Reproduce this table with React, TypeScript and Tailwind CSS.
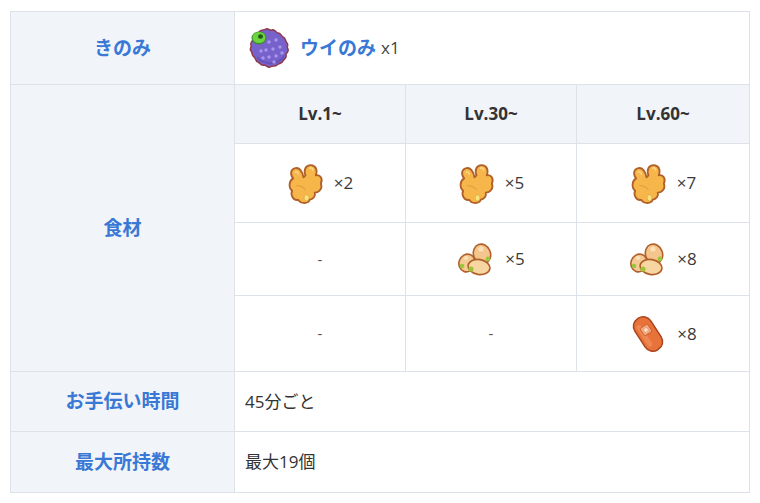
import React from "react";

const Berry = () => (
  <svg width="46" height="46" viewBox="0 0 46 46">
    <path
      d="M14 7 C16 4 19 6 21 4 C23 3 25 6 27 5 C30 4 31 8 33 8 C36 8 36 11 38 12 C41 13 40 16 42 18 C44 20 41 22 43 24 C44 27 41 28 41 30 C42 33 39 34 38 36 C37 39 34 38 32 40 C30 42 28 40 25 42 C23 43 21 40 19 40 C16 41 15 38 13 37 C10 36 11 33 9 32 C6 30 8 28 6 26 C4 24 7 22 6 20 C5 17 8 16 8 14 C8 11 11 10 12 9 Z"
      fill="#7762cc"
      stroke="#8e3b4c"
      strokeWidth="1.5"
      strokeLinejoin="round"
    />
    <path d="M12 31 C19 39 32 40 40 29 L39 33 C33 41 19 41 12 34 Z" fill="#5a47ab" opacity="0.55" />
    {[
      [24, 17], [31, 15], [35, 22], [28, 24], [21, 25], [31, 31], [24, 32], [37, 28], [16, 26], [18, 33], [29, 37],
    ].map(([x, y], i) => (
      <circle key={i} cx={x} cy={y} r="1.7" fill="#a796ea" />
    ))}
    <ellipse cx="14" cy="13" rx="7.5" ry="6.5" fill="#3d8a2a" />
    <ellipse cx="14" cy="12.5" rx="6.5" ry="5.5" fill="#6bd43f" />
    <ellipse cx="15.5" cy="11.5" rx="2.5" ry="2.2" fill="#1f5a1a" />
  </svg>
);

const Ginger = () => (
  <svg width="37" height="41" viewBox="0 0 36 40">
    <path
      d="M16 14 C15 8 12 4 8 5 C3 6 3 12 6 15 C2 17 1 24 5 27 C3 31 6 37 11 36 C13 40 21 40 22 36 C26 35 28 32 27 29 C31 29 35 25 33 20 C35 16 33 11 28 12 C30 7 28 2 23 2 C18 2 16 7 18 12 Q17 13 16 14 Z"
      fill="#f6b64a"
      stroke="#b0602a"
      strokeWidth="1.8"
      strokeLinejoin="round"
    />
    <path d="M8 9 C9 8 11 9 11 11 M22 5 C23 4 25 5 25 7" stroke="#fbd58a" strokeWidth="1.5" fill="none" strokeLinecap="round" />
    <path d="M9 22 C13 22 16 24 18 26" stroke="#e49b3c" strokeWidth="1" fill="none" />
    <ellipse cx="19" cy="34" rx="2.4" ry="3" fill="#f8e27a" stroke="#d8a040" strokeWidth="0.6" />
  </svg>
);

const Beans = () => (
  <svg width="38" height="34" viewBox="0 0 38 34">
    <g stroke="#b0602a" strokeWidth="1.6">
      <ellipse cx="25" cy="12" rx="8.5" ry="10" transform="rotate(-20 25 12)" fill="#f4c68e" />
      <ellipse cx="10" cy="21" rx="8" ry="9" transform="rotate(20 10 21)" fill="#f4ca95" />
      <ellipse cx="22" cy="25" rx="11" ry="7.5" transform="rotate(10 22 25)" fill="#f8d6a2" />
    </g>
    <circle cx="31" cy="17" r="2.4" fill="#9cc53a" />
    <circle cx="5" cy="24" r="2.3" fill="#9cc53a" />
    <circle cx="14" cy="27" r="2.6" fill="#9cc53a" />
    <circle cx="24" cy="7" r="2.6" fill="#fde4bd" opacity="0.85" />
    <circle cx="9" cy="16" r="2" fill="#fde4bd" opacity="0.85" />
  </svg>
);

const Bacon = () => (
  <svg width="38" height="40" viewBox="0 0 38 40">
    <g transform="rotate(-33 19 20)">
      <rect x="9.5" y="1.5" width="19" height="37" rx="9" fill="#e8733a" stroke="#a9441e" strokeWidth="1.5" />
      <rect x="12.5" y="7" width="5" height="25" rx="2.5" fill="#f08e5a" opacity="0.7" />
      <rect x="15" y="11" width="9" height="9" rx="1.5" fill="#f3a57c" stroke="#c75a2a" strokeWidth="0.8" />
      <circle cx="19.5" cy="15.5" r="1.7" fill="#fbe4d4" />
    </g>
  </svg>
);

const th = "bg-[#f1f4f8] border border-[#dde2e8] text-[#3a78d6] font-bold text-[19px] text-center";
const lv = "bg-[#f1f4f8] border border-[#dde2e8] text-[#333] font-bold text-[17px] text-center";
const td = "bg-white border border-[#dde2e8] text-[#333] text-[17px]";

const Item = ({ icon, n }: { icon: React.ReactNode; n: number }) => (
  <div className="flex items-center justify-center gap-[10px]">
    {icon}
    <span className="text-[17px] text-[#3a3a3a]">×{n}</span>
  </div>
);

const Dash = () => <div className="text-center text-[#555] text-[15px]">-</div>;

export default function App() {
  return (
    <div
      className="w-[760px] h-[503px] bg-white pt-[11px] pl-[10px]"
      style={{ fontFamily: '"Open Sans", "Noto Sans CJK JP", sans-serif' }}
    >
      <table className="border-collapse table-fixed w-[739px]">
        <colgroup>
          <col className="w-[224px]" />
          <col className="w-[171px]" />
          <col className="w-[171px]" />
          <col className="w-[173px]" />
        </colgroup>
        <tbody>
          <tr className="h-[73px]">
            <th className={th}>きのみ</th>
            <td className={td + " pl-[10px]"} colSpan={3}>
              <div className="flex items-center">
                <Berry />
                <span className="ml-[9px] text-[#3a78d6] font-bold text-[19px]">ウイのみ</span>
                <span className="ml-[5px] text-[#444] text-[17px]">x1</span>
              </div>
            </td>
          </tr>
          <tr className="h-[59px]">
            <th className={th} rowSpan={4}>食材</th>
            <th className={lv}>Lv.1~</th>
            <th className={lv}>Lv.30~</th>
            <th className={lv}>Lv.60~</th>
          </tr>
          <tr className="h-[79px]">
            <td className={td}><Item icon={<Ginger />} n={2} /></td>
            <td className={td}><Item icon={<Ginger />} n={5} /></td>
            <td className={td}><Item icon={<Ginger />} n={7} /></td>
          </tr>
          <tr className="h-[73px]">
            <td className={td}><Dash /></td>
            <td className={td}><Item icon={<Beans />} n={5} /></td>
            <td className={td}><Item icon={<Beans />} n={8} /></td>
          </tr>
          <tr className="h-[76px]">
            <td className={td}><Dash /></td>
            <td className={td}><Dash /></td>
            <td className={td}><Item icon={<Bacon />} n={8} /></td>
          </tr>
          <tr className="h-[60px]">
            <th className={th}>お手伝い時間</th>
            <td className={td + " pl-[10px]"} colSpan={3}>45分ごと</td>
          </tr>
          <tr className="h-[61px]">
            <th className={th}>最大所持数</th>
            <td className={td + " pl-[10px]"} colSpan={3}>最大19個</td>
          </tr>
        </tbody>
      </table>
    </div>
  );
}
